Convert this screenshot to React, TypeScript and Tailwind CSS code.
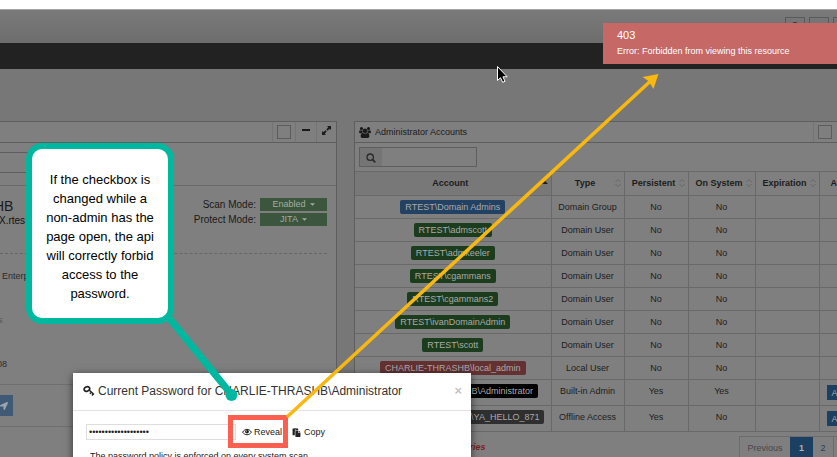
import type { ReactNode } from 'react'
import { FaLocationArrow, FaLock, FaPaste } from 'react-icons/fa'

type Account = {
  name: string
  color: string
  type: string
  persistent: string
  onSystem: string
  managed?: boolean
}

const DOMAIN = 'bg-[#1c3d1d]'

const ACCOUNTS: Account[] = [
  { name: 'RTEST\\Domain Admins', color: 'bg-[#234263]', type: 'Domain Group', persistent: 'No', onSystem: 'No' },
  { name: 'RTEST\\admscott', color: DOMAIN, type: 'Domain User', persistent: 'No', onSystem: 'No' },
  { name: 'RTEST\\admkeeler', color: DOMAIN, type: 'Domain User', persistent: 'No', onSystem: 'No' },
  { name: 'RTEST\\cgammans', color: DOMAIN, type: 'Domain User', persistent: 'No', onSystem: 'No' },
  { name: 'RTEST\\cgammans2', color: DOMAIN, type: 'Domain User', persistent: 'No', onSystem: 'No' },
  { name: 'RTEST\\ivanDomainAdmin', color: DOMAIN, type: 'Domain User', persistent: 'No', onSystem: 'No' },
  { name: 'RTEST\\scott', color: DOMAIN, type: 'Domain User', persistent: 'No', onSystem: 'No' },
  { name: 'CHARLIE-THRASHB\\local_admin', color: 'bg-[#643133]', type: 'Local User', persistent: 'No', onSystem: 'No' },
  { name: 'CHARLIE-THRASHB\\Administrator', color: 'bg-black', type: 'Built-in Admin', persistent: 'Yes', onSystem: 'Yes', managed: true },
  { name: 'CHARLIE-THRASHB\\YA_HELLO_871', color: 'bg-[#2f2f2f]', type: 'Offline Access', persistent: 'Yes', onSystem: 'No', managed: true },
]

const COLUMNS = [
  { label: 'Account', width: 'w-[196px]' },
  { label: 'Type', width: 'w-[73px]' },
  { label: 'Persistent', width: 'w-[64px]' },
  { label: 'On System', width: 'w-[67px]' },
  { label: 'Expiration', width: 'w-[64px]' },
]

function KeyIcon() {
  return (
    <svg viewBox="0 0 12 11" className="w-3 h-[11px] shrink-0" fill="none" stroke="#222" aria-hidden="true">
      <ellipse cx="3.9" cy="4" rx="2.9" ry="2.2" strokeWidth="1.7" transform="rotate(-25 3.9 4)" />
      <path d="M5.8 4.8l5.200 4.700M8.300 7L6.900 8.800M10.300 8.800L9 10.500" strokeWidth="1.500" />
    </svg>
  )
}

function UsersIcon() {
  return (
    <svg viewBox="0 0 1920 1792" className="w-3 h-[11px] shrink-0" fill="currentColor" aria-hidden="true">
      <path d="M593 896q-162 5-265 128H194q-82 0-138-40.500T0 865q0-353 124-353 6 0 43.500 21t97.500 42.500T384 597q67 0 133-23-5 37-5 66 0 139 81 256zm1071 637q0 120-73 189.500t-194 69.500H523q-121 0-194-69.500T256 1533q0-53 3.500-103.500t14-109T300 1212t43-97.500 62-81 85.500-53.500T602 960q10 0 43 21.500t73 48 107 48 135 21.500 135-21.500 107-48 73-48 43-21.500q61 0 111.500 20t85.500 53.500 62 81 43 97.500 26.500 108.500 14 109 3.500 103.500zM640 256q0 106-75 181t-181 75-181-75-75-181 75-181T384 0t181 75 75 181zm704 384q0 159-112.500 271.500T960 1024 688.500 911.500 576 640t112.500-271.500T960 256t271.500 112.500T1344 640zm576 225q0 78-56 118.500t-138 40.500h-134q-103-123-265-128 81-117 81-256 0-29-5-66 66 23 133 23 59 0 119-21.500t97.500-42.500 43.500-21q124 0 124 353zm-128-609q0 106-75 181t-181 75-181-75-75-181 75-181 181-75 181 75 75 181z" />
    </svg>
  )
}

function SearchIcon() {
  return (
    <svg viewBox="0 0 10 10" className="w-[10px] h-[10px]" fill="none" stroke="#2b2b2b" aria-hidden="true">
      <circle cx="4.200" cy="4.200" r="3.200" strokeWidth="1.300" />
      <path d="M6.600 6.600L9.300 9.300" strokeWidth="1.700" />
    </svg>
  )
}

function EyeIcon() {
  return (
    <svg viewBox="0 0 10 8" className="w-[10px] h-2" fill="none" stroke="#222" aria-hidden="true">
      <path d="M.6 4.200C2.800.4 7.200.4 9.400 4.200 7.200 7.600 2.800 7.600.6 4.200z" />
      <circle cx="5" cy="3.600" r="1.900" fill="#222" stroke="none" />
      <circle cx="4.400" cy="3" r=".5" fill="#fff" stroke="none" />
    </svg>
  )
}

function ExpandIcon() {
  return (
    <svg viewBox="0 0 10 10" className="w-[9px] h-[9px]" fill="#1a1a1a" aria-hidden="true">
      <path d="M5.500 0H10v4.500L8.500 3 6.200 5.200 4.800 3.800 7 1.500zM4.500 10H0V5.500L1.500 7l2.300-2.200 1.400 1.400L3 8.500z" />
    </svg>
  )
}

function SortIcon() {
  return (
    <svg viewBox="0 0 6 8" className="w-[6px] h-2 shrink-0" fill="none" stroke="#696969" aria-hidden="true">
      <path d="M.5 3L3 .5 5.500 3M.5 5L3 7.500 5.500 5" />
    </svg>
  )
}

function ModeButton({ children }: { children: ReactNode }) {
  return (
    <button className="w-[67px] h-[13px] flex items-center justify-center gap-1 bg-[#3b563c] text-[9px] leading-none text-[#a3ada3]">
      {children}
      <svg viewBox="0 0 6 3" className="w-[5px] h-[3px]" fill="#a3ada3" aria-hidden="true">
        <path d="M0 0h6L3 3z" />
      </svg>
    </button>
  )
}

function SystemPanel() {
  return (
    <section className="w-[337px] h-[400px] shrink-0 border-y border-r border-[#5e5e5e] bg-[#7f7f7f]">
      <div className="h-[21px] flex justify-end border-b border-[#5e5e5e]">
        <label className="w-[23px] flex items-center justify-center border-l border-[#747474]">
          <input type="checkbox" aria-label="Select system" className="appearance-none w-[14px] h-[14px] border border-[#5c5c5c]" />
        </label>
        <button aria-label="Collapse" className="w-[21px] flex items-center justify-center border-l border-[#747474] pb-1">
          <span className="w-2 h-[2px] bg-[#1a1a1a]" />
        </button>
        <button aria-label="Expand" className="w-5 flex items-center justify-center border-l border-[#747474] pb-1">
          <ExpandIcon />
        </button>
      </div>

      <div className="h-[43px] pt-[9px] border-b border-[#6a6a6a]">
        <input aria-label="Filter" className="w-[140px] h-[21px] block border-y border-r border-[#5e5e5e]" />
      </div>

      <div className="h-[30px] mt-3 flex items-start justify-between pr-[9px]">
        <div className="-ml-1.5 whitespace-nowrap text-[#1a1a1a]">
          <h2 className="text-[14px] leading-[16px]">HB</h2>
          <p className="pl-[5px] text-[10px] leading-[14px] text-[#111]">X.rtes</p>
        </div>
        <dl className="grid grid-cols-[auto_auto] gap-x-1 gap-y-[2px] text-[10px] leading-[13px] text-[#1a1a1a] text-right">
          <dt>Scan Mode:</dt>
          <dd className="flex"><ModeButton>Enabled</ModeButton></dd>
          <dt>Protect Mode:</dt>
          <dd className="flex"><ModeButton>JITA</ModeButton></dd>
        </dl>
      </div>

      <div className="mt-[25px] mr-[9px] border-t border-dashed border-[#666]" />
      <div className="pt-[15px] pl-[2px] text-[9px] leading-[14px] text-[#2b2b2b]">
        <p>Enterp</p>
        <p className="-ml-1 pt-[30px] text-[#555]">s</p>
        <p className="-ml-[5px] pt-[30px]">08</p>
      </div>
      <div className="mt-[13px] h-[43px] flex items-center border-y border-[#6f6f6f]">
        <button aria-label="Send" className="w-[13px] h-[21px] flex items-center justify-end pr-[5px] bg-[#3e5a74]">
          <FaLocationArrow className="w-2 h-2 text-[#9aa5ae]" />
        </button>
      </div>
    </section>
  )
}

function AccountRow({ account }: { account: Account }) {
  const { name, color, type, persistent, onSystem, managed } = account
  const cell = managed ? 'px-0 pt-1 pb-0 align-top border-r border-[#696969]' : 'p-0 border-r border-[#696969]'

  return (
    <tr className={`border-b border-[#696969] ${managed ? 'h-[26px]' : 'h-[23px]'}`}>
      <td className={cell}>
        <span className={`inline-flex items-center align-top px-[5px] rounded-[2px] whitespace-nowrap text-[#a9a9a9] ${color}`}>
          {managed && <FaLock className="w-2 h-2 mr-3" />}
          {name}
        </span>
      </td>
      <td className={cell}>{type}</td>
      <td className={cell}>{persistent}</td>
      <td className={cell}>{onSystem}</td>
      <td className={cell} />
      <td className="p-0 pl-[7px] text-left">
        {managed && <button className="block w-10 h-[15px] pl-[5px] text-left bg-[#1b4062] text-[#a9a9a9]">A</button>}
      </td>
    </tr>
  )
}

function AccountsTable() {
  return (
    <table className="w-[520px] table-fixed border-collapse text-[9px] leading-[14px] text-center text-[#1c1c1c]">
      <thead>
        <tr className="h-6 border-y border-[#696969]">
          {COLUMNS.map(({ label, width }, i) => (
            <th key={label} className={`${width} p-0 border-r border-[#696969] ${i === 0 ? 'bg-[#787878]' : ''}`}>
              <div className="flex items-center pl-1 pr-[3px] pb-[2px]">
                <span className="flex-1">{label}</span>
                {i === 0 ? (
                  <svg viewBox="0 0 6 3" className="w-[6px] h-[3px]" fill="#1c1c1c" aria-hidden="true">
                    <path d="M0 3h6L3 0z" />
                  </svg>
                ) : (
                  <SortIcon />
                )}
              </div>
            </th>
          ))}
          <th className="p-0 pl-[11px] pb-[2px] text-left">A</th>
        </tr>
      </thead>
      <tbody>
        {ACCOUNTS.map((account) => (
          <AccountRow key={account.name} account={account} />
        ))}
      </tbody>
    </table>
  )
}

function AccountsPanel() {
  return (
    <section className="flex-1 min-w-0 h-[400px] overflow-hidden border-y border-l border-[#5e5e5e] bg-[#7f7f7f]">
      <header className="h-[21px] flex items-center border-b border-[#5e5e5e] pl-1 text-[#1a1a1a]">
        <UsersIcon />
        <h2 className="flex-1 pl-1 text-[9px] leading-none">Administrator Accounts</h2>
        <label className="w-6 h-full flex items-center pl-1 border-l border-[#747474]">
          <input type="checkbox" aria-label="Select accounts" className="appearance-none w-[14px] h-[14px] border border-[#5c5c5c]" />
        </label>
      </header>

      <div className="h-7 flex items-center pl-1">
        <div className="w-[118px] h-5 flex border border-[#5e5e5e]">
          <span className="w-[22px] flex items-center justify-center pt-[2px] bg-[#757575]">
            <SearchIcon />
          </span>
          <input aria-label="Search accounts" className="flex-1 min-w-0 px-1 text-[9px] outline-none" />
        </div>
      </div>

      <AccountsTable />

      <div className="flex justify-between pt-1">
        <p className="pl-[101px] pt-1 text-[9px] leading-[14px] italic font-bold text-[#7b1f22]">entries</p>
        <nav className="h-[23px] flex border-l border-t border-[#6c6c6c] text-[9px] leading-none">
          <button className="w-[50px] text-[#474747]">Previous</button>
          <button className="w-[23px] bg-[#1b4062] text-[#b0b0b0] font-bold">1</button>
          <button className="w-[21px] text-[#1e3f63] border-r border-[#6c6c6c]">2</button>
          <span className="w-[3px]" />
        </nav>
      </div>
    </section>
  )
}

function PasswordDialog() {
  return (
    <div
      role="dialog"
      aria-labelledby="dialog-title"
      className="absolute left-[73px] top-[373px] w-[398px] h-[150px] bg-white text-[#222] shadow-[0_2px_8px_rgba(0,0,0,0.6)]"
    >
      <header className="h-[38px] flex items-center pl-[10px] pr-[9px] pb-[2px] border-b border-[#e2e2e2]">
        <KeyIcon />
        <h1 id="dialog-title" className="flex-1 pl-[3px] text-[12px] leading-none text-[#333]">
          Current Password for CHARLIE-THRASHB\Administrator
        </h1>
        <button aria-label="Close" className="text-[13px] leading-none font-bold text-[#c4c4c4]">×</button>
      </header>
      <div className="flex items-center pt-[13px] pl-[13px] text-[9px] leading-none">
        <input
          type="password"
          aria-label="Current password"
          readOnly
          defaultValue="abcdefghijklmnopqrs"
          className="w-[150px] h-4 px-[2px] border border-[#ddd] text-[9px] text-[#222] outline-none"
        />
        <button className="h-4 flex items-center gap-[2px] pl-[6px]">
          <EyeIcon />
          Reveal
        </button>
        <button className="h-4 flex items-center gap-[3px] pl-[10px]">
          <FaPaste className="w-[9px] h-[9px]" />
          Copy
        </button>
      </div>
      <p className="pt-[10px] pl-[17px] text-[9px] leading-[12px]">The password policy is enforced on every system scan.</p>
    </div>
  )
}

function Toast() {
  return (
    <div role="alert" className="absolute left-[603px] right-0 top-[23px] h-[41px] pl-[14px] pt-[5px] bg-[#c66866] text-white">
      <p className="text-[11px] leading-[14px]">403</p>
      <p className="pt-[2px] text-[9px] leading-[14px] whitespace-nowrap">Error: Forbidden from viewing this resource</p>
    </div>
  )
}

function Annotations() {
  return (
    <>
      <div className="absolute left-[228px] top-[415px] w-[60px] h-[33px] border-[5px] border-[#fa5f50]" />
      <svg viewBox="0 0 837 457" className="absolute left-0 top-0 w-[837px] h-[457px] pointer-events-none" aria-hidden="true">
        <path d="M169 318L231 394" stroke="#00b89f" strokeWidth="7" />
        <circle cx="231.500" cy="395" r="6" fill="#00b89f" />
        <path d="M287 417L650 81.500" stroke="#f9b80f" strokeWidth="3.500" />
        <path d="M658.500 74l-5 15-5-8-6-4z" fill="#f9b80f" />
        <path d="M497.500 66.500v14l3-2.800 2.200 4.600 2.300-1-2.100-4.500h4.300z" fill="#000" stroke="#fff" />
      </svg>
      <div className="absolute left-[26px] top-[143px] w-[148px] h-[181px] flex items-center justify-center px-2 pt-[6px] rounded-[16px] border-[6px] border-[#00b89f] bg-white">
        <p className="text-[13px] leading-[19px] text-center text-black">
          If the checkbox is changed while a non-admin has the page open, the api will correctly forbid access to the password.
        </p>
      </div>
    </>
  )
}

export default function App() {
  return (
    <div className="relative h-screen overflow-hidden bg-[#777] font-['Liberation_Sans',Arial,sans-serif]">
      <div className="h-[9px] bg-white" />
      <header className="h-[34px] flex justify-end gap-1 pt-[7px] border-t border-[#a5a5a5] bg-linear-to-b from-[#7a7a7a] to-[#6d6d6d]">
        <button aria-label="User" className="w-5 h-5 flex justify-center pt-1 border border-[#5a5a5a]">
          <span className="w-[6px] h-[6px] rounded-full bg-[#333]" />
        </button>
        <button aria-label="Settings" className="w-5 h-5 border border-[#5a5a5a]" />
        <button aria-label="Menu" className="w-1 h-5 border-y border-l border-[#5a5a5a]" />
      </header>
      <nav className="h-[26px] bg-[#222]" />
      <main className="flex gap-[17px] pt-[52px]">
        <SystemPanel />
        <AccountsPanel />
      </main>
      <PasswordDialog />
      <Toast />
      <Annotations />
    </div>
  )
}
